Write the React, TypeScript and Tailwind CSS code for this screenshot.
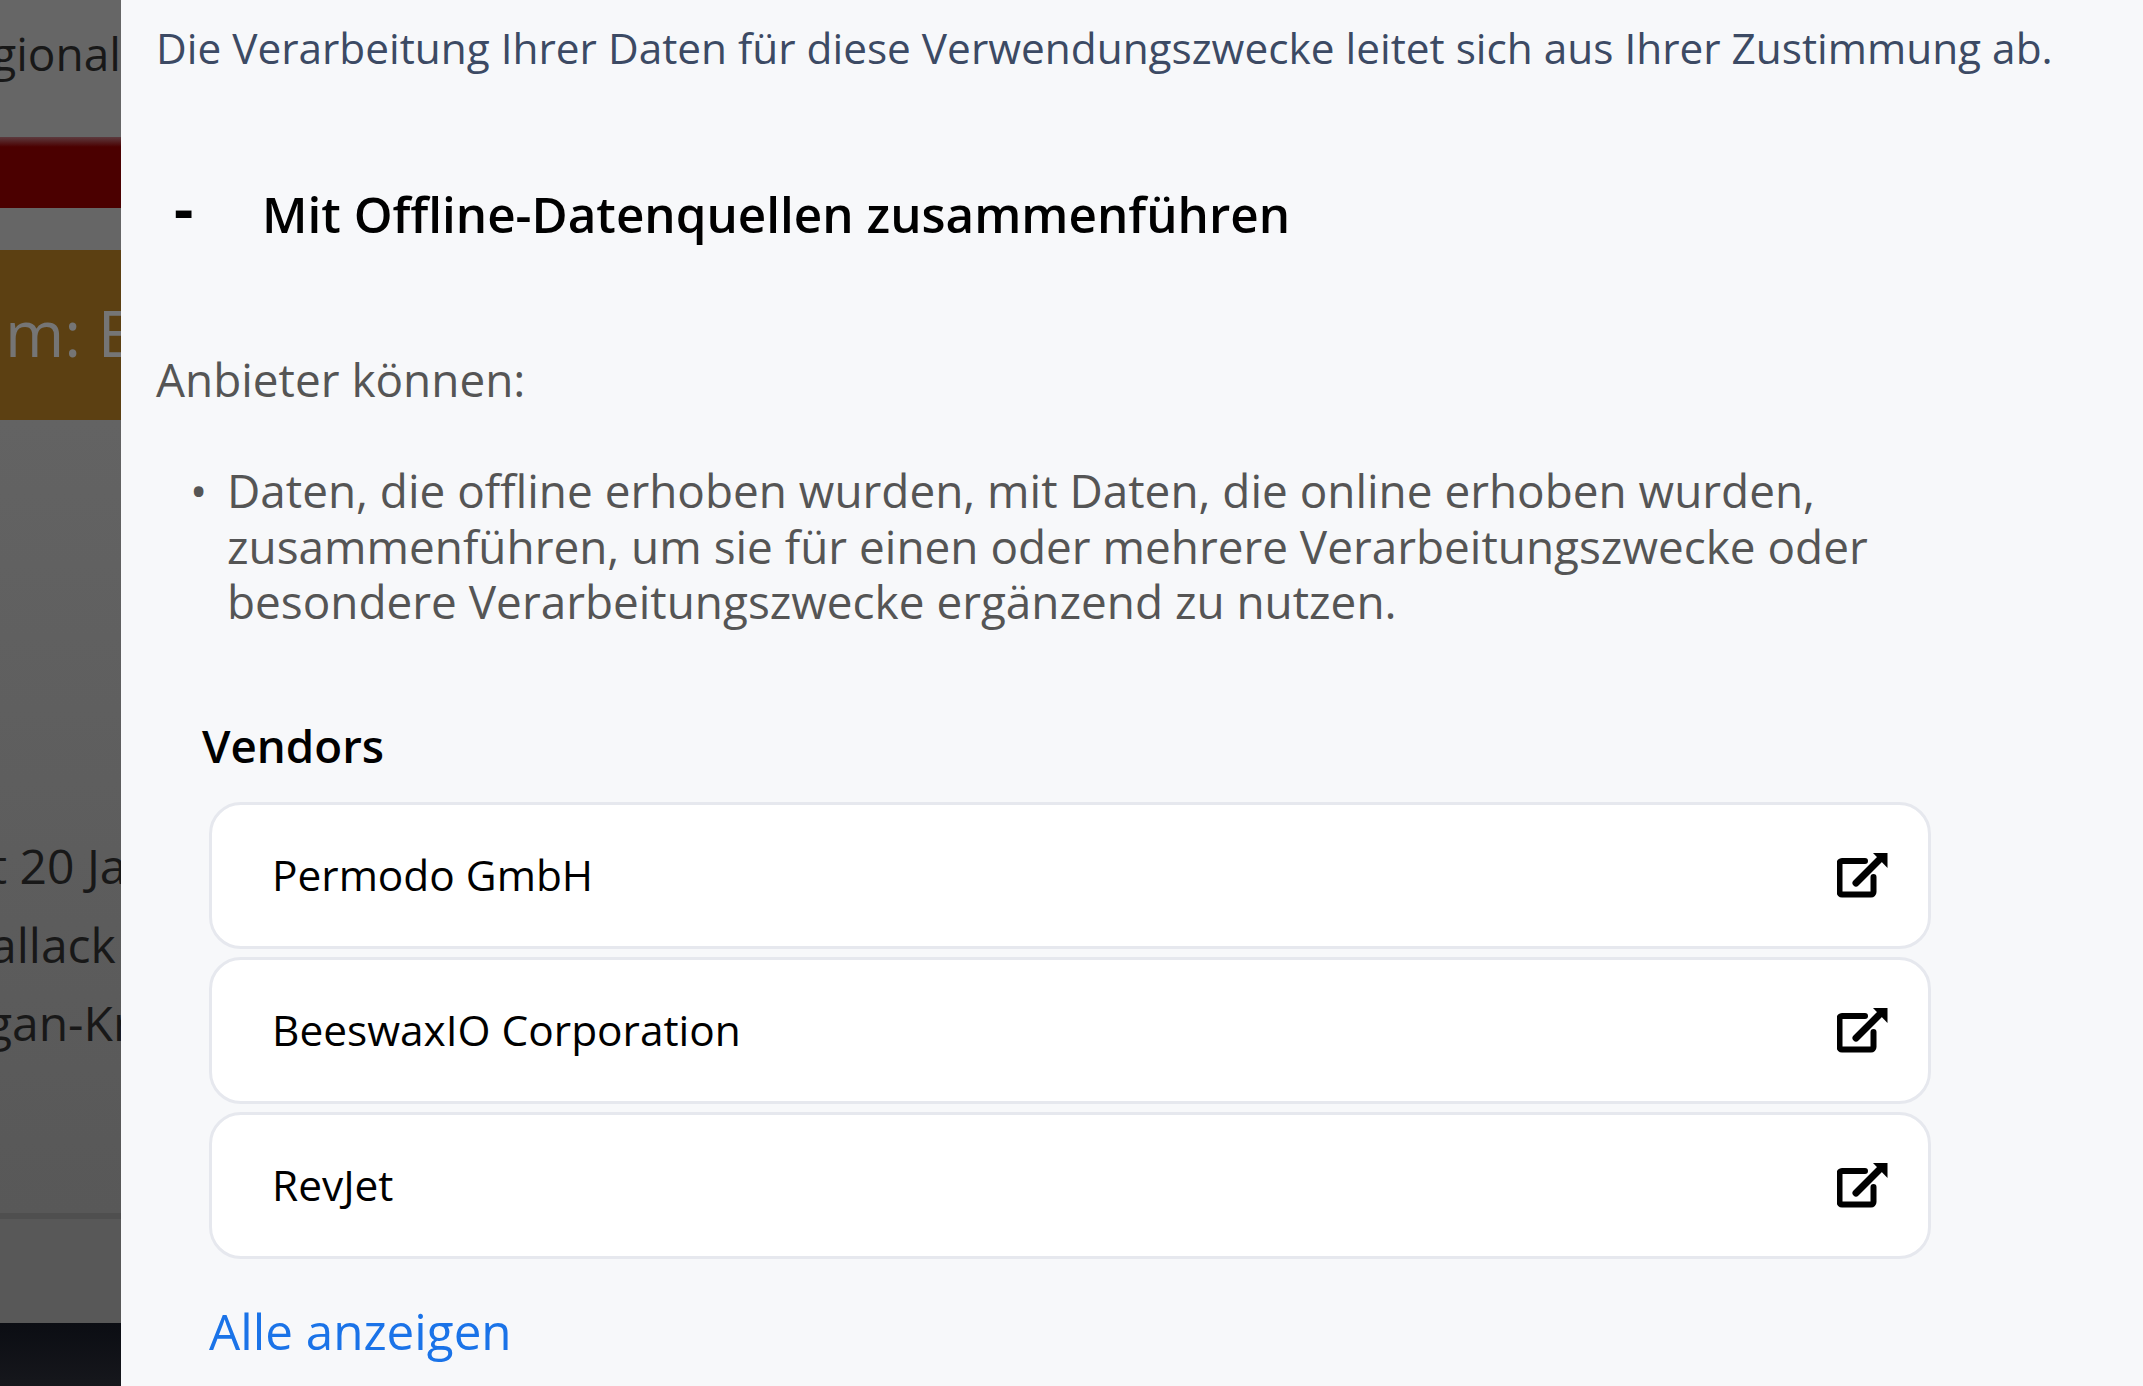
const vendors = ["Permodo GmbH", "BeeswaxIO Corporation", "RevJet"];

function LinkIcon() {
  return (
    <svg width="51" height="50" viewBox="0 0 51 50" className="shrink-0">
      <path
        d="M28 11H5a2.500 2.500 0 0 0-2.500 2.500v28.500a2.500 2.500 0 0 0 2.500 2.500h29a2.500 2.500 0 0 0 2.500-2.500V27"
        fill="none"
        stroke="#000"
        strokeWidth="6"
        strokeLinecap="round"
      />
      <path d="M19 33 42 10" fill="none" stroke="#000" strokeWidth="7" strokeLinecap="round" />
      <path d="M36 3h14.500v15z" fill="#000" />
    </svg>
  );
}

function Backdrop() {
  return (
    <div className="w-[121px] shrink-0 h-[1386px] overflow-hidden bg-[#666666] flex flex-col whitespace-nowrap text-[#181818]">
      <div className="h-[137px] shrink-0 overflow-hidden pt-[23px] text-[46px] leading-[60px]">
        <span className="block ml-[-63px]">Regional</span>
      </div>
      <div className="h-[71px] shrink-0 bg-[linear-gradient(#5c3a3e,#4b0000_14%,#4b0000)]" />
      <div className="h-[42px] shrink-0" />
      <div className="h-[170px] shrink-0 bg-[#5c4012] overflow-hidden text-[#757575] text-[64px] leading-[90px] pt-[38px]">
        <span className="block ml-[5px]">m: Event</span>
      </div>
      <div className="flex-1 bg-[linear-gradient(#636363,#585858)] pt-[407px] text-[48px] leading-[78.600px] overflow-hidden">
        <span className="block ml-[-10px]">t 20 Jan</span>
        <span className="block ml-[-10px]">allack</span>
        <span className="block ml-[-68px]">Logan-Kr</span>
      </div>
      <div className="h-[110px] shrink-0 border-t-[6px] border-[#4f4f4f] bg-[#585858]" />
      <div className="h-[63px] shrink-0 bg-[linear-gradient(#0b0d13,#16171c)]" />
    </div>
  );
}

export default function App() {
  return (
    <div className="flex h-[1386px] w-[2143px] overflow-hidden font-['Open_Sans',sans-serif]">
      <Backdrop />
      <div className="flex-1 bg-[#f7f8fa] pl-[35px] pr-[40px] overflow-hidden">
        <p className="mt-[18px] text-[42.350px] leading-[60px] text-[#3c4a64] whitespace-nowrap">
          Die Verarbeitung Ihrer Daten für diese Verwendungszwecke leitet sich aus Ihrer Zustimmung ab.
        </p>
        <div className="mt-[106px] flex items-center h-[60px]">
          <span className="w-[106px] mb-[12px] text-[60px] font-bold leading-[60px] text-black pl-[18px]">-</span>
          <h2 className="text-[49.400px] font-semibold leading-[60px] text-black whitespace-nowrap">
            Mit Offline-Datenquellen zusammenführen
          </h2>
        </div>
        <p className="mt-[105px] text-[45.900px] leading-[60px] text-[#555555]">Anbieter können:</p>
        <div className="mt-[54px] flex text-[45.900px] leading-[55.500px] text-[#555555]">
          <span className="w-[71px] shrink-0 pl-[34px]">•</span>
          <p className="w-[1760px]">
            Daten, die offline erhoben wurden, mit Daten, die online erhoben wurden, zusammenführen, um sie für einen oder mehrere Verarbeitungszwecke oder besondere Verarbeitungszwecke ergänzend zu nutzen.
          </p>
        </div>
        <h3 className="mt-[85px] ml-[46px] text-[45.700px] font-semibold leading-[60px] text-black">Vendors</h3>
        <div className="mt-[27px] ml-[53px] w-[1722px] flex flex-col gap-[8px]">
          {vendors.map((name) => (
            <div
              key={name}
              className="h-[147px] flex items-center justify-between rounded-[32px] border-[3px] border-[#e6e8ee] bg-white pl-[60px] pr-[40px]"
            >
              <span className="text-[42.400px] leading-[56px] text-black">{name}</span>
              <LinkIcon />
            </div>
          ))}
        </div>
        <a className="block mt-[40px] ml-[53px] text-[49.400px] leading-[64px] text-[#1a73e8]">Alle anzeigen</a>
      </div>
    </div>
  );
}
